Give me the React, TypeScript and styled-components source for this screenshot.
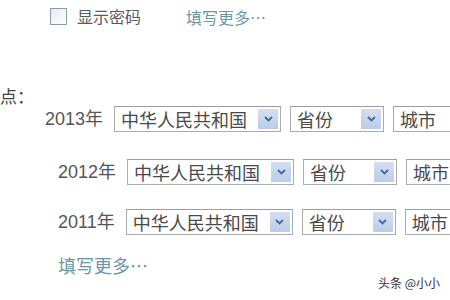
import React from "react";
import styled, { createGlobalStyle } from "styled-components";

const Global = createGlobalStyle`
  html, body { margin: 0; padding: 0; background: #fff; overflow: hidden; }
  body { font-family: "Liberation Sans", "Noto Sans CJK SC", sans-serif; }
`;

const Page = styled.div`
  width: 450px;
  height: 300px;
  overflow: hidden;
  position: relative;
  display: flex;
  flex-direction: column;
  padding-top: 8px;
  box-sizing: border-box;
`;

const TopRow = styled.div`
  display: flex;
  align-items: center;
  height: 17px;
  padding-left: 50px;
`;

const CheckBox = styled.span`
  width: 15px;
  height: 15px;
  border: 1px solid #8d9ca6;
  background: linear-gradient(135deg, #e6eaee, #ffffff);
  box-sizing: content-box;
`;

const Label = styled.span`
  margin-left: 10px;
  font-size: 16px;
  color: #5a5a5a;
  line-height: 17px;
  font-family: "Noto Sans CJK SC", sans-serif;
`;

const Link = styled.span<{ $ml: number; $size: number }>`
  margin-left: ${(p) => p.$ml}px;
  font-size: ${(p) => p.$size}px;
  color: #6a97a6;
  line-height: 1;
  white-space: nowrap;
  font-family: "Noto Sans CJK SC", sans-serif;
`;

const Section = styled.div`
  margin-top: 61px;
  margin-left: -17px;
  font-size: 17px;
  color: #444;
  line-height: 20px;
  white-space: nowrap;
  font-family: "Noto Sans CJK SC", sans-serif;
`;

const Row = styled.div<{ $indent: number; $mt: number }>`
  display: flex;
  align-items: center;
  gap: 9px;
  padding-left: ${(p) => p.$indent}px;
  margin-top: ${(p) => p.$mt}px;
  height: 26px;
  white-space: nowrap;
`;

const Year = styled.span`
  font-size: 18px;
  color: #555;
  line-height: 26px;
  margin-right: 2px;
`;

const SelectBox = styled.div<{ $w: number }>`
  flex: none;
  position: relative;
  width: ${(p) => p.$w}px;
  height: 26px;
  box-sizing: border-box;
  border: 1px solid #a8acb0;
  border-top-color: #9a9ea3;
  background: #fff;
  display: flex;
  align-items: center;
  padding-left: 6px;
  font-size: 18px;
  color: #4a4a4a;
  font-family: "Noto Sans CJK SC", sans-serif;
  overflow: hidden;
`;

const Arrow = styled.span`
  position: absolute;
  right: 2px;
  top: 2px;
  bottom: 2px;
  width: 20px;
  background: linear-gradient(#d3def2, #bccde9);
  display: flex;
  align-items: center;
  justify-content: center;
`;

const Watermark = styled.div`
  position: absolute;
  right: 10px;
  bottom: 9px;
  font-size: 12px;
  color: #333;
  font-family: "Noto Sans CJK SC", sans-serif;
`;

const Chevron = () => (
  <svg width="9" height="6" viewBox="0 0 9 6">
    <path d="M1 1 L4.5 4.5 L8 1" fill="none" stroke="#46679a" strokeWidth="1.8" />
  </svg>
);

const Select = ({ w, text }: { w: number; text: string }) => (
  <SelectBox $w={w}>
    {text}
    <Arrow>
      <Chevron />
    </Arrow>
  </SelectBox>
);

const rows = [
  { year: "2013年", indent: 45, mt: 0 },
  { year: "2012年", indent: 58, mt: 27 },
  { year: "2011年", indent: 58, mt: 24 },
];

export default function App() {
  return (
    <>
      <Global />
      <Page>
        <TopRow>
          <CheckBox />
          <Label>显示密码</Label>
          <Link $ml={45} $size={16}>填写更多…</Link>
        </TopRow>
        <Section>地点：</Section>
        {rows.map((r) => (
          <Row key={r.year} $indent={r.indent} $mt={r.mt}>
            <Year>{r.year}</Year>
            <Select w={167} text="中华人民共和国" />
            <Select w={94} text="省份" />
            <Select w={90} text="城市" />
          </Row>
        ))}
        <Row $indent={58} $mt={17}>
          <Link $ml={0} $size={18}>填写更多…</Link>
        </Row>
        <Watermark>头条 @小小</Watermark>
      </Page>
    </>
  );
}
